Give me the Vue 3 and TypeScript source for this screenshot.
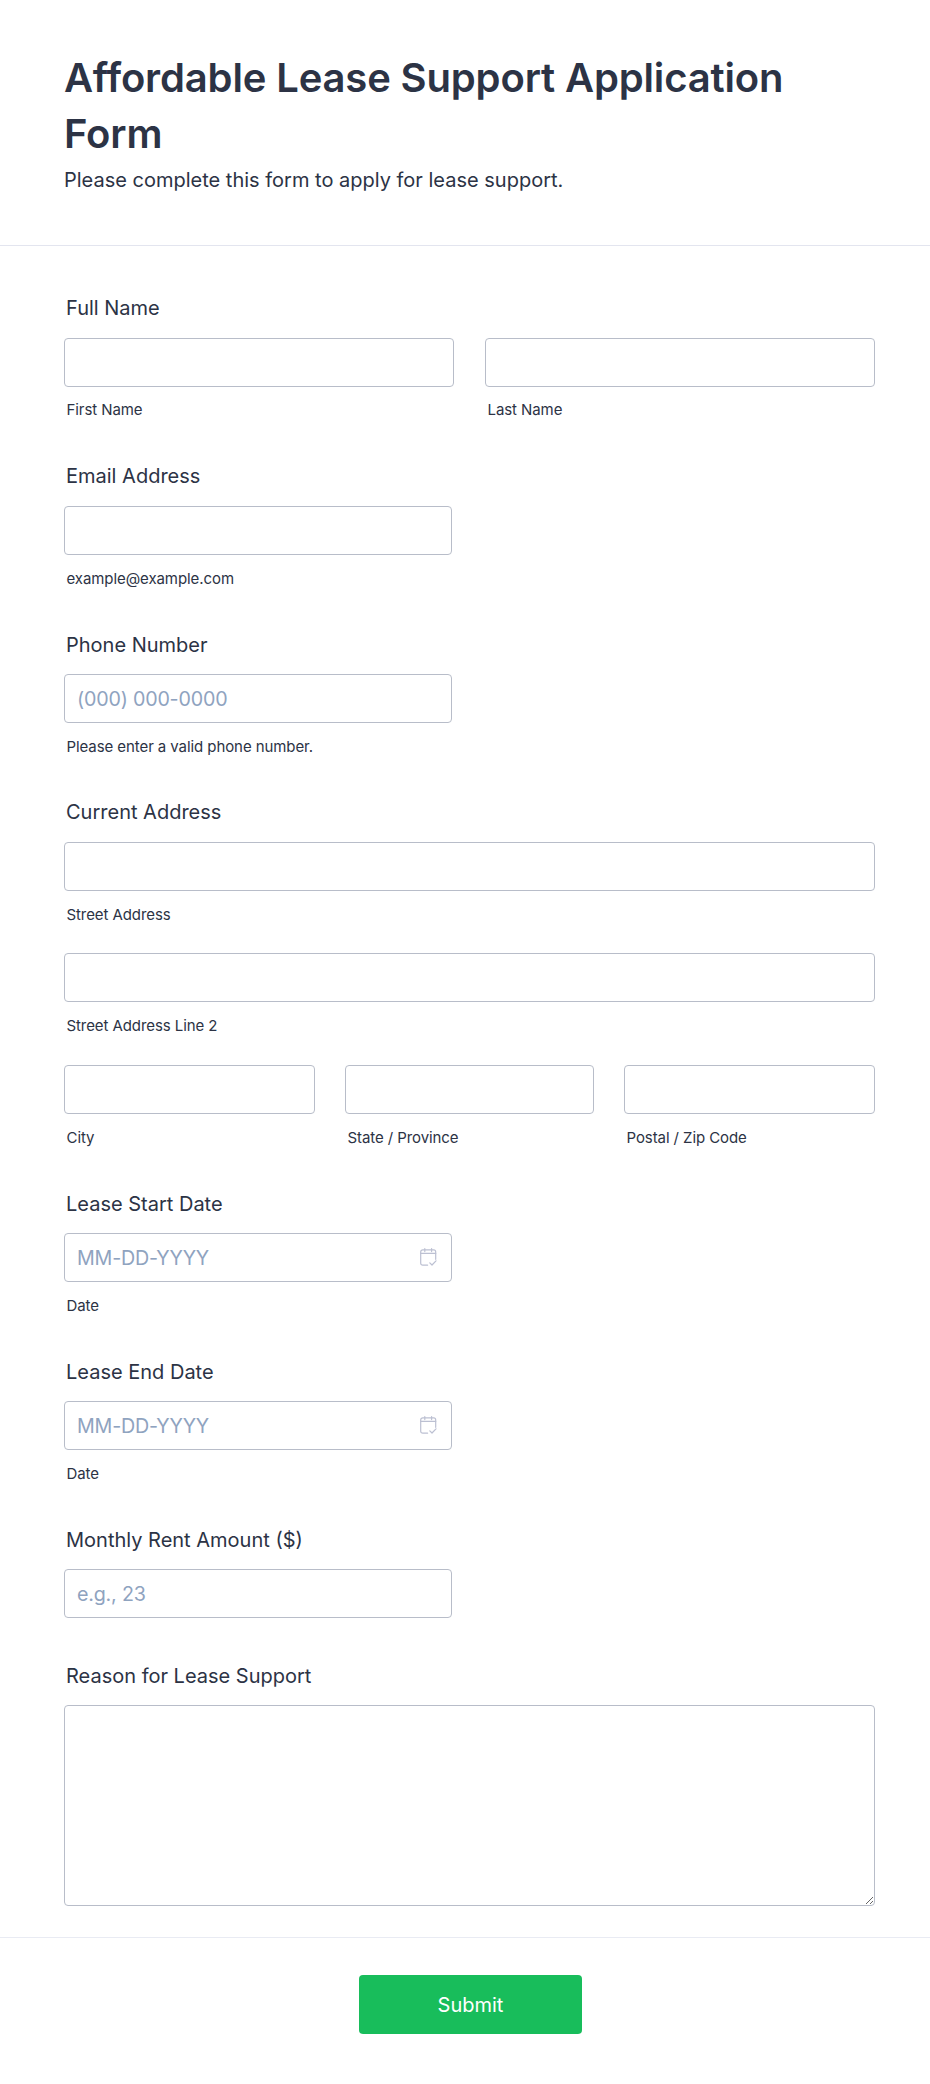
<script setup lang="ts">
const dateFields = ['Lease Start Date', 'Lease End Date'];
</script>

<template>
  <main class="form">
    <header class="form-header">
      <h1>Affordable Lease Support Application Form</h1>
      <p>Please complete this form to apply for lease support.</p>
    </header>

    <div class="form-body">
      <section class="field field-top">
        <label class="label">Full Name</label>
        <div class="row row-name">
          <div class="cell">
            <input type="text" />
            <span class="sub">First Name</span>
          </div>
          <div class="cell">
            <input type="text" />
            <span class="sub">Last Name</span>
          </div>
        </div>
      </section>

      <section class="field field-top">
        <label class="label">Email Address</label>
        <div class="half">
          <input type="email" />
          <span class="sub">example@example.com</span>
        </div>
      </section>

      <section class="field">
        <label class="label">Phone Number</label>
        <div class="half">
          <input type="tel" placeholder="(000) 000-0000" />
          <span class="sub">Please enter a valid phone number.</span>
        </div>
      </section>

      <section class="field field-top field-address">
        <label class="label">Current Address</label>
        <div class="address">
          <div class="cell">
            <input type="text" />
            <span class="sub">Street Address</span>
          </div>
          <div class="cell cell-tall">
            <input type="text" />
            <span class="sub">Street Address Line 2</span>
          </div>
          <div class="row row-city">
            <div class="cell">
              <input type="text" />
              <span class="sub">City</span>
            </div>
            <div class="cell">
              <input type="text" />
              <span class="sub">State / Province</span>
            </div>
            <div class="cell">
              <input type="text" />
              <span class="sub">Postal / Zip Code</span>
            </div>
          </div>
        </div>
      </section>

      <section v-for="name in dateFields" :key="name" class="field">
        <label class="label">{{ name }}</label>
        <div class="half">
          <div class="date-wrap">
            <input type="text" placeholder="MM-DD-YYYY" />
            <svg class="cal" width="18" height="18" viewBox="0 0 18 18" fill="none" stroke="#bcc0d2" stroke-width="1.2" stroke-linecap="round" stroke-linejoin="round">
              <path d="M7.6 17.2H2.7a2 2 0 0 1-2-2V3.9a2 2 0 0 1 2-2h11a2 2 0 0 1 2 2v7.4" />
              <path d="M.7 5.4h15" />
              <path d="M4.8 .6v3M11.6 .6v3" />
              <path d="M9.8 14.8l2.2 2.2 4-4.2" />
            </svg>
          </div>
          <span class="sub">Date</span>
        </div>
      </section>

      <section class="field field-rent">
        <label class="label">Monthly Rent Amount ($)</label>
        <div class="half">
          <input type="text" placeholder="e.g., 23" />
        </div>
      </section>

      <section class="field field-reason">
        <label class="label">Reason for Lease Support</label>
        <textarea></textarea>
      </section>
    </div>

    <footer class="form-footer">
      <button type="button">Submit</button>
    </footer>
  </main>
</template>

<style>
html,
body {
  margin: 0;
  background: #fff;
}
</style>

<style scoped>
.form {
  width: 930px;
  height: 2084px;
  box-sizing: border-box;
  font-family: Inter, "Liberation Sans", sans-serif;
  color: #2c3345;
  background: #fff;
}

.form-header {
  height: 246px;
  box-sizing: border-box;
  padding: 50px 64px 0;
  border-bottom: 1px solid #e3e5ef;
}

.form-header h1 {
  margin: 0;
  font-size: 40px;
  line-height: 56px;
  font-weight: 600;
  letter-spacing: -0.15px;
}

.form-header p {
  margin: 4px 0 0;
  font-size: 20px;
  line-height: 28px;
}

.form-body {
  height: 1691px;
  box-sizing: border-box;
  padding: 50px 55px 0 64px;
  display: flex;
  flex-direction: column;
}

.field {
  height: 168px;
  flex: none;
}

.field-address {
  height: 391px;
}

.field-rent {
  height: 136px;
}

.label {
  display: block;
  height: 42px;
  box-sizing: border-box;
  padding: 1px 0 0 2px;
  font-size: 20px;
  line-height: 24px;
  font-weight: 400;
}

.field-top .label {
  padding-top: 0;
}

.row {
  display: grid;
}

.row-name {
  grid-template-columns: 390px 390px;
  column-gap: 31px;
}

.row-city {
  grid-template-columns: 251px 249px 251px;
  column-gap: 30px;
}

.half {
  width: 388px;
}

.address {
  display: flex;
  flex-direction: column;
}

.address > .cell {
  height: 111px;
}

.address > .cell-tall {
  height: 112px;
}

input,
textarea {
  display: block;
  width: 100%;
  box-sizing: border-box;
  border: 1px solid #b8bdc9;
  border-radius: 4px;
  background: #fff;
  font-family: inherit;
  color: #2c3345;
  outline: none;
  margin: 0;
}

input {
  height: 49px;
  padding: 0 12px;
  font-size: 19.7px;
  letter-spacing: -0.2px;
}

input::placeholder {
  color: #8fa3bf;
  opacity: 1;
}

textarea {
  height: 201px;
}

.sub {
  display: block;
  margin-top: 14px;
  padding-left: 2.5px;
  font-size: 15px;
  line-height: 20px;
  letter-spacing: -0.08px;
}

.row-name .sub {
  margin-top: 13px;
}

.date-wrap {
  position: relative;
}

.cal {
  position: absolute;
  right: 14px;
  top: 15px;
}

.form-footer {
  height: 147px;
  box-sizing: border-box;
  border-top: 1px solid #e9ebf3;
  display: flex;
  justify-content: center;
  padding: 37px 0 0 11px;
}

button {
  width: 223px;
  height: 59px;
  border: 0;
  border-radius: 4px;
  background: #18bd5b;
  color: #fff;
  font-family: inherit;
  font-size: 20px;
  font-weight: 400;
}
</style>
